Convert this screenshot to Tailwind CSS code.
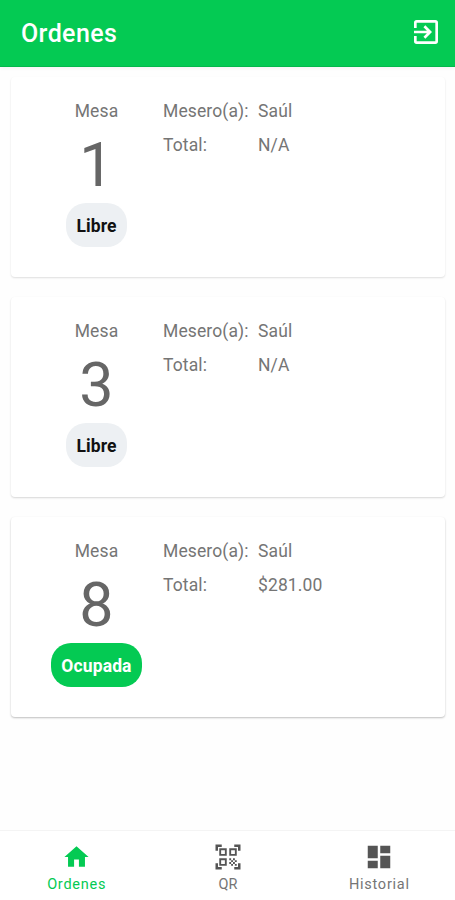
<!DOCTYPE html>
<html lang="es">
<head>
<meta charset="utf-8">
<title>Ordenes</title>
<script src="https://cdn.jsdelivr.net/npm/@tailwindcss/browser@4"></script>
</head>
<body class="w-[455px] h-[900px] overflow-hidden flex flex-col bg-[#fefefe] font-[Roboto,sans-serif] text-[#757575]">
<header class="h-[67px] shrink-0 bg-[#04ca53] border-b border-[#04b84c] flex items-center justify-between pl-[21px] pr-[13px] text-white shadow-[0_1px_4px_rgba(0,0,0,0.05)]">
  <h1 class="text-[25px] leading-[30px] font-medium tracking-[0.4px] pt-[2px]">Ordenes</h1>
  <svg class="w-[32px] h-[32px] -mt-[2px]" viewBox="0 0 24 24" fill="currentColor"><path d="M10.09 15.59 11.5 17l5-5-5-5-1.41 1.41L12.67 11H3v2h9.67l-2.58 2.59zM19 3H5a2 2 0 0 0-2 2v4h2V5h14v14H5v-4H3v4a2 2 0 0 0 2 2h14a2 2 0 0 0 2-2V5a2 2 0 0 0-2-2z"/></svg>
</header>
<main class="flex-1 pl-[11px] pr-[10px] pt-[10px] flex flex-col gap-[20px]">
  <section class="h-[200px] shrink-0 bg-white rounded-[4px] shadow-[0_1px_2px_rgba(0,0,0,0.13)] flex pt-[22px] text-[17.5px] leading-[24px] tracking-[0.12px]">
    <div class="w-[152px] pl-[19px] flex flex-col items-center">
      <div>Mesa</div>
      <div class="h-[80px] text-[61px] leading-[84px] tracking-normal text-[#666]">1</div>
      <div class="h-[44px] px-[10.5px] rounded-[20px] bg-[#edf0f3] text-[#111] font-bold leading-[46px]">Libre</div>
    </div>
    <div class="grid grid-cols-[95px_auto] auto-rows-[24px] gap-y-[10px] content-start">
      <span>Mesero(a):</span><span>Saúl</span>
      <span>Total:</span><span>N/A</span>
    </div>
  </section>
  <section class="h-[200px] shrink-0 bg-white rounded-[4px] shadow-[0_1px_2px_rgba(0,0,0,0.16)] flex pt-[22px] text-[17.5px] leading-[24px] tracking-[0.12px]">
    <div class="w-[152px] pl-[19px] flex flex-col items-center">
      <div>Mesa</div>
      <div class="h-[80px] text-[61px] leading-[84px] tracking-normal text-[#666]">3</div>
      <div class="h-[44px] px-[10.5px] rounded-[20px] bg-[#edf0f3] text-[#111] font-bold leading-[46px]">Libre</div>
    </div>
    <div class="grid grid-cols-[95px_auto] auto-rows-[24px] gap-y-[10px] content-start">
      <span>Mesero(a):</span><span>Saúl</span>
      <span>Total:</span><span>N/A</span>
    </div>
  </section>
  <section class="h-[200px] shrink-0 bg-white rounded-[4px] shadow-[0_1px_2px_rgba(0,0,0,0.25)] flex pt-[22px] text-[17.5px] leading-[24px] tracking-[0.12px]">
    <div class="w-[152px] pl-[19px] flex flex-col items-center">
      <div>Mesa</div>
      <div class="h-[80px] text-[61px] leading-[84px] tracking-normal text-[#666]">8</div>
      <div class="h-[44px] px-[10.5px] rounded-[20px] bg-[#04ca53] text-white font-bold leading-[46px]">Ocupada</div>
    </div>
    <div class="grid grid-cols-[95px_auto] auto-rows-[24px] gap-y-[10px] content-start">
      <span>Mesero(a):</span><span>Saúl</span>
      <span>Total:</span><span>$281.00</span>
    </div>
  </section>
</main>
<nav class="h-[70px] shrink-0 border-t border-[#f4f4f4] bg-white grid grid-cols-3 pl-[1px] text-[14.5px] leading-[20px] tracking-[0.75px]">
  <a class="flex flex-col items-center pt-[11px] text-[#04ca53]">
    <svg class="w-[29px] h-[30px]" viewBox="0 0 24 24" fill="currentColor"><path d="M10 20v-6h4v6h5v-8h3L12 3 2 12h3v8z"/></svg>
    <span class="mt-[3px]">Ordenes</span>
  </a>
  <a class="flex flex-col items-center pt-[11px]">
    <svg class="w-[30px] h-[30px] text-[#555]" viewBox="0 0 24 24" fill="currentColor"><path d="M9.500 6.500v3h-3v-3h3M11 5H5v6h6V5zm-1.500 9.500v3h-3v-3h3M11 13H5v6h6v-6zm6.500-6.500v3h-3v-3h3M19 5h-6v6h6V5zm-6 8h1.500v1.500H13V13zm1.500 1.500H16V16h-1.500v-1.500zM16 13h1.500v1.500H16V13zm-3 3h1.500v1.500H13V16zm1.500 1.500H16V19h-1.500v-1.500zM16 16h1.500v1.500H16V16zm1.500-1.500H19V16h-1.500v-1.500zm0 3H19V19h-1.500v-1.500zM22 7h-2V4h-3V2h5v5zm0 15v-5h-2v3h-3v2h5zM2 22h5v-2H4v-3H2v5zM2 2v5h2V4h3V2H2z"/></svg>
    <span class="mt-[3px] tracking-normal">QR</span>
  </a>
  <a class="flex flex-col items-center pt-[11px]">
    <svg class="w-[30px] h-[30px] text-[#555]" viewBox="0 0 24 24" fill="currentColor"><path d="M3 13h8V3H3v10zm0 8h8v-6H3v6zm10 0h8V11h-8v10zm0-18v6h8V3h-8z"/></svg>
    <span class="mt-[3px]">Historial</span>
  </a>
</nav>
</body>
</html>
